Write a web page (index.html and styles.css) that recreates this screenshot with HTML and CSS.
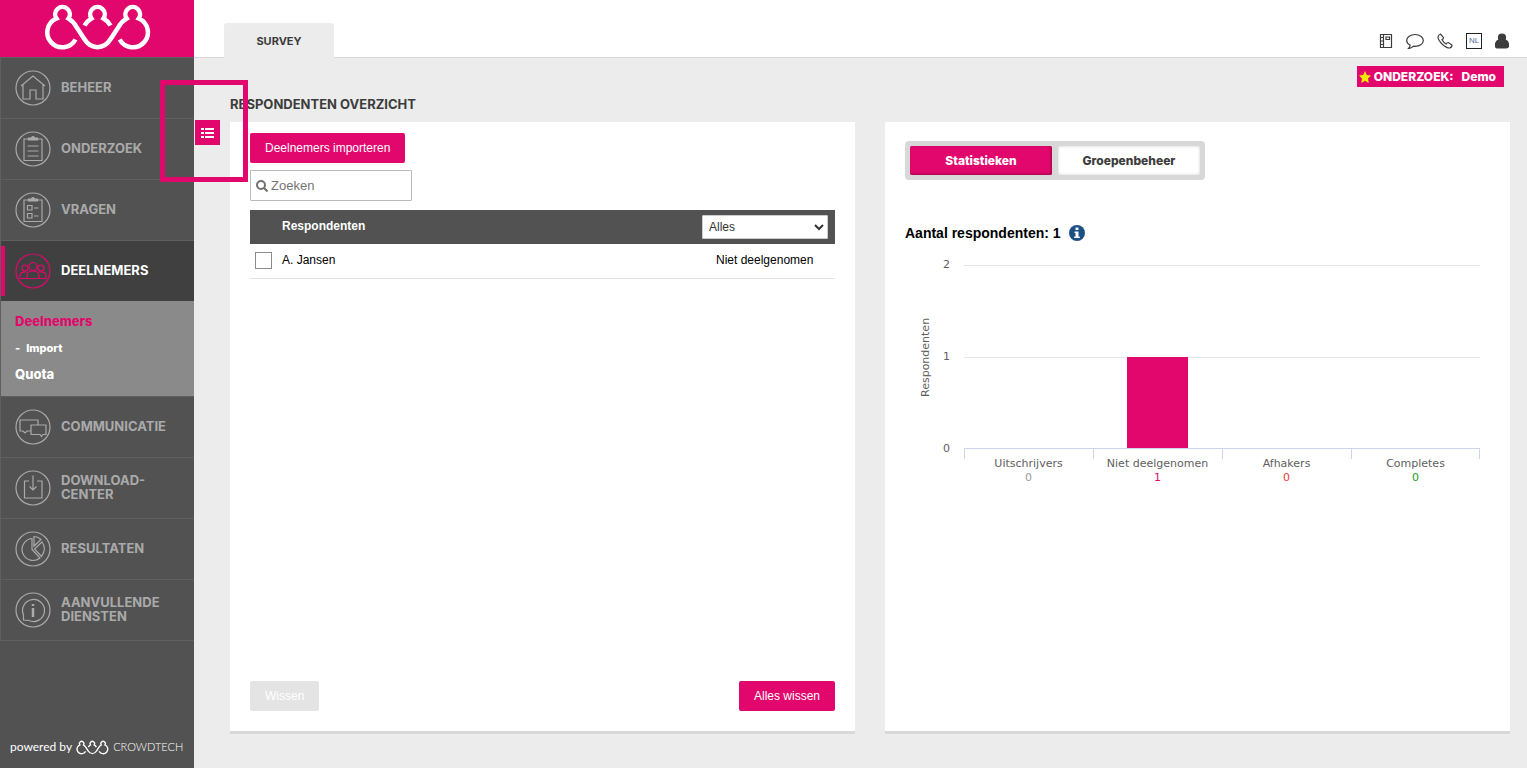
FILE: index.html
```html
<!DOCTYPE html>
<html lang="nl">
<head>
    <meta charset="UTF-8">
    <meta name="viewport" content="width=device-width, initial-scale=1.0">
    <title>Respondenten overzicht</title>
    <link rel="stylesheet" href="styles.css">
</head>
<body>
    <!-- Shared logo shape -->
    <svg class="sprite" width="0" height="0" aria-hidden="true">
        <symbol id="logo" viewBox="44 3 108 48">
            <path d="M75.500 39.500A15 15 0 1 1 56.500 18.500A7.300 7.300 0 1 1 68.500 18.500Q73 21 76.500 27L84 38.500C91 50 104 50 111 38.500L118.500 27Q122 21 126.700 18.500A7.300 7.300 0 1 1 138.700 18.500A15 15 0 1 1 119.700 39.500"/>
            <path d="M84.500 25.500Q87 21 91.500 18.500A7.300 7.300 0 1 1 103.500 18.500Q108 21 110.500 25.500"/>
        </symbol>
    </svg>

    <aside class="sidebar">
        <a class="brand" href="#" aria-label="Crowdtech">
            <svg class="logo" width="108" height="48"><use href="#logo"/></svg>
        </a>

        <nav class="menu">
            <a class="menu-item" href="#">
                <svg class="menu-icon" viewBox="0 0 36 36"><circle cx="18" cy="18" r="17"/><path d="M6 16L18 6L30 16M8 15V29H15V20H21V29H28V15"/></svg>
                <span>BEHEER</span>
            </a>
            <a class="menu-item" href="#">
                <svg class="menu-icon" viewBox="0 0 36 36"><circle cx="18" cy="18" r="17"/><path d="M9 8H27V29.500H9ZM12.500 15H23.500M12.500 20H23.500M12.500 25H23.500"/><path class="filled" d="M13.500 9V7H16Q18 4 20 7H22.500V9Z"/></svg>
                <span>ONDERZOEK</span>
            </a>
            <a class="menu-item" href="#">
                <svg class="menu-icon" viewBox="0 0 36 36"><circle cx="18" cy="18" r="17"/><path d="M9 8H27V29.500H9ZM12.500 13.500H17V18H12.500ZM12.500 21.500H17V26H12.500ZM19 16H23.500M19 24H23.500"/><path class="filled" d="M13.500 9V7H16Q18 4 20 7H22.500V9Z"/></svg>
                <span>VRAGEN</span>
            </a>
            <a class="menu-item active" href="#">
                <svg class="menu-icon" viewBox="0 0 36 36"><circle cx="18" cy="18" r="17"/><circle cx="18" cy="13.500" r="4"/><circle cx="10" cy="15" r="3"/><circle cx="26" cy="15" r="3"/><path d="M12 25.500V23Q12 18 18 18Q24 18 24 23V25.500M12 19Q5 18 5 23V25.500H31V23Q31 18 24 19"/></svg>
                <span>DEELNEMERS</span>
            </a>
            <div class="submenu">
                <a class="submenu-item current" href="#">Deelnemers</a>
                <a class="submenu-item child" href="#">Import</a>
                <a class="submenu-item" href="#">Quota</a>
            </div>
            <a class="menu-item" href="#">
                <svg class="menu-icon" viewBox="0 0 36 36"><circle cx="18" cy="18" r="17"/><path d="M16 22H12L10 24L8 22H5V11H23V16M16 16H31V25.500H28L26.500 27.500L25 25.500H16Z"/></svg>
                <span>COMMUNICATIE</span>
            </a>
            <a class="menu-item" href="#">
                <svg class="menu-icon" viewBox="0 0 36 36"><circle cx="18" cy="18" r="17"/><path d="M14 11H9.500V28H27V11H22M18 5.500V20M14.500 16.500L18 20L21.500 16.500"/></svg>
                <span>DOWNLOAD-<br>CENTER</span>
            </a>
            <a class="menu-item" href="#">
                <svg class="menu-icon" viewBox="0 0 36 36"><circle cx="18" cy="18" r="17"/><path d="M17 7.500A11 11 0 1 0 25 27L17 18.500ZM19 5.500V15L26 8.500Q23 5.500 19 5.500ZM27 11L19.500 18L26.500 25.500Q32 17.500 27 11Z"/></svg>
                <span>RESULTATEN</span>
            </a>
            <a class="menu-item" href="#">
                <svg class="menu-icon" viewBox="0 0 36 36"><circle cx="18" cy="18" r="17"/><path d="M8.500 28V23A11 11 0 1 1 14 28.500Z"/><path class="thick" d="M18 16V25M18 12V14"/></svg>
                <span>AANVULLENDE<br>DIENSTEN</span>
            </a>
        </nav>

        <div class="powered">
            <span>powered by</span>
            <svg class="logo" width="33" height="15"><use href="#logo"/></svg>
            <span class="powered-name">CROWDTECH</span>
        </div>

        <button class="menu-toggle" type="button" aria-label="Menu">
            <svg width="14" height="12" viewBox="0 0 14 12"><path d="M4 2H13M4 6H13M4 10H13M0 2H3M0 6H3M0 10H3"/></svg>
        </button>
        <div class="highlight"></div>
    </aside>

    <div class="page">
        <header class="topbar">
            <a class="tab" href="#">SURVEY</a>
            <div class="tools">
                <a href="#" aria-label="Handleiding"><svg width="14" height="16" viewBox="0 0 14 16"><path d="M1.500 1.500H12.500V14.500H1.500ZM4.500 1.500V14.500M7 4H10.500V6.500H7ZM1 4.500H4M1 8H4M1 11.500H4"/></svg></a>
                <a href="#" aria-label="Chat"><svg width="18" height="16" viewBox="0 0 18 16"><path d="M2.500 15.500Q4.500 13.500 4 12Q0.700 10.500 0.700 7.500C0.700 4 4.500 1.500 9 1.500S17.300 4 17.300 7.500S13.500 13.300 9 13.300L7.500 13.200Q5.500 15.300 2.500 15.500Z"/></svg></a>
                <a href="#" aria-label="Telefoon"><svg width="16" height="16" viewBox="0 0 16 16"><path d="M1 4Q1.500 1.500 3.500 1L6.500 4.700Q6.500 6 5 6.800Q6.500 9.500 9.200 11Q10 9.500 11.300 9.500L15 12Q15 14.500 12.500 15Q9.500 15 5.500 11.500Q1 7 1 4Z"/></svg></a>
                <a class="language" href="#">NL</a>
                <a href="#" aria-label="Account"><svg class="solid" width="14" height="16" viewBox="0 0 14 16"><circle cx="7" cy="4.500" r="3.500"/><path d="M3.500 7Q7 10 10.500 7Q13.500 8 13.500 12V13Q13.500 15 11 15H3Q0.500 15 0.500 13V12Q0.500 8 3.500 7Z"/></svg></a>
            </div>
        </header>

        <main class="content">
            <div class="survey-badge">
                <svg width="12" height="12" viewBox="0 0 12 12"><path d="M6 0L7.800 4L12 4.500L9 7.500L9.700 12L6 9.800L2.300 12L3 7.500L0 4.500L4.200 4Z"/></svg>
                <span>ONDERZOEK:</span>
                <span>Demo</span>
            </div>
            <h1>RESPONDENTEN OVERZICHT</h1>

            <div class="panels">
                <section class="panel">
                    <button class="btn" type="button">Deelnemers importeren</button>
                    <div class="search">
                        <svg width="12" height="12" viewBox="0 0 12 12"><circle cx="5" cy="5" r="4"/><path d="M8 8L11.500 11.500"/></svg>
                        <input type="text" placeholder="Zoeken" aria-label="Zoeken">
                    </div>
                    <table class="respondents">
                        <thead>
                            <tr>
                                <th class="col-check"></th>
                                <th>Respondenten</th>
                                <th class="col-status">
                                    <select aria-label="Status">
                                        <option>Alles</option>
                                        <option>Niet deelgenomen</option>
                                    </select>
                                </th>
                            </tr>
                        </thead>
                        <tbody>
                            <tr>
                                <td class="col-check"><input type="checkbox" id="resp1"></td>
                                <td><label for="resp1">A. Jansen</label></td>
                                <td class="status">Niet deelgenomen</td>
                            </tr>
                        </tbody>
                    </table>
                    <div class="panel-actions">
                        <button class="btn" type="button" disabled>Wissen</button>
                        <button class="btn" type="button">Alles wissen</button>
                    </div>
                </section>

                <section class="panel stats">
                    <div class="switch">
                        <button class="selected" type="button">Statistieken</button>
                        <button type="button">Groepenbeheer</button>
                    </div>
                    <h2>
                        Aantal respondenten: 1
                        <svg width="16" height="16" viewBox="0 0 16 16"><circle cx="8" cy="8" r="8"/><path d="M6.500 2.500H9.500V5H6.500ZM5.500 6.500H9.500V11.500H10.800V13H5.200V11.500H6.500V8H5.500Z"/></svg>
                    </h2>
                    <div class="chart">
                        <div class="axis-title">Respondenten</div>
                        <div class="y-axis">
                            <span>2</span>
                            <span>1</span>
                            <span>0</span>
                        </div>
                        <div class="plot">
                            <div class="bar" style="height: 0%"></div>
                            <div class="bar" style="height: 50%"></div>
                            <div class="bar" style="height: 0%"></div>
                            <div class="bar" style="height: 0%"></div>
                        </div>
                        <div class="x-axis">
                            <div>Uitschrijvers<br><span class="gray">0</span></div>
                            <div>Niet deelgenomen<br><span class="pink">1</span></div>
                            <div>Afhakers<br><span class="red">0</span></div>
                            <div>Completes<br><span class="green">0</span></div>
                        </div>
                    </div>
                </section>
            </div>
        </main>
    </div>
</body>
</html>
```
FILE: styles.css
```css
* {
    box-sizing: border-box;
}
body {
    margin: 0;
    min-height: 100vh;
    display: flex;
    background: #ececec;
    color: #000;
    font-family: "Liberation Sans", Arial, sans-serif;
    font-size: 12px;
}
a {
    color: inherit;
    text-decoration: none;
}
button, input, select {
    font-family: inherit;
}
.sprite {
    position: absolute;
}
.logo {
    flex: none;
    fill: none;
    stroke: #fff;
    stroke-width: 4.5;
}

/* Sidebar */
.sidebar {
    position: relative;
    flex: none;
    width: 194px;
    display: flex;
    flex-direction: column;
    background: #525252;
}
.brand {
    height: 57px;
    padding: 3px 0 0 44px;
    background: #e2076c;
}
.menu {
    border-left: 1px solid #5f5f5f;
    border-bottom: 1px solid #5f5f5f;
    font-family: Inter, sans-serif;
    font-weight: 700;
    color: #aaa;
}
.menu-item {
    height: 61px;
    display: flex;
    align-items: center;
    gap: 10px;
    padding-left: 14px;
    border-top: 1px solid #5f5f5f;
    font-size: 13px;
    line-height: 14px;
}
.menu-item span {
    padding-bottom: 2px;
}
.menu-icon {
    width: 36px;
    height: 36px;
    flex: none;
    fill: none;
    stroke: currentColor;
    stroke-width: 1.2;
}
.menu-icon .filled {
    fill: currentColor;
}
.menu-icon .thick {
    stroke-width: 2.5;
}
.menu-item.active {
    background: linear-gradient(#e2076c, #e2076c) 0 5px / 4px 50px no-repeat #404040;
    color: #fff;
}
.active .menu-icon {
    color: #e2076c;
}
.submenu {
    height: 95px;
    padding: 10px 14px;
    background: #8a8a8a;
    color: #fff;
    font-weight: 800;
}
.submenu-item {
    display: block;
    font-size: 13px;
    line-height: 20px;
}
.submenu-item.current {
    color: #e2076c;
}
.submenu-item.child {
    padding: 7px 0 6px;
    font-size: 11px;
    line-height: 20px;
}
.submenu-item.child::before {
    content: "-";
    margin-right: 6px;
}
.powered {
    display: flex;
    align-items: center;
    gap: 4px;
    margin-top: auto;
    padding: 0 10px 12px;
    color: #fff;
    font-family: Lato, sans-serif;
    font-size: 12px;
    line-height: 18px;
    white-space: nowrap;
}
.powered-name {
    font-size: 11px;
    font-weight: 300;
}
.menu-toggle {
    position: absolute;
    top: 120px;
    left: 195px;
    width: 25px;
    height: 25px;
    padding: 0;
    display: flex;
    align-items: center;
    justify-content: center;
    border: none;
    background: #e2076c;
}
.menu-toggle svg {
    stroke: #fff;
    stroke-width: 2;
}
.highlight {
    position: absolute;
    top: 80px;
    left: 160px;
    width: 88px;
    height: 102px;
    border: 5px solid #e2076c;
    pointer-events: none;
}

/* Top bar */
.page {
    flex: 1;
    min-width: 0;
    display: flex;
    flex-direction: column;
}
.topbar {
    height: 58px;
    display: flex;
    align-items: flex-end;
    justify-content: space-between;
    padding: 0 18px 0 30px;
    background: #fff;
    border-bottom: 1px solid #d9d9d9;
}
.tab {
    width: 110px;
    height: 35px;
    margin-bottom: -1px;
    border-radius: 3px 3px 0 0;
    background: #ececec;
    color: #3c3c3c;
    font: 700 11px/36px Inter, sans-serif;
    text-align: center;
}
.tools {
    display: flex;
    align-items: center;
    gap: 13px;
    padding-bottom: 8px;
    color: #3c3c3c;
}
.tools svg {
    display: block;
    fill: none;
    stroke: currentColor;
    stroke-width: 1.2;
}
.tools .solid {
    fill: currentColor;
}
.language {
    width: 16px;
    height: 16px;
    border: 1px solid #222;
    color: #4a6d9c;
    font-size: 8px;
    line-height: 14px;
    text-align: center;
}

/* Content */
.content {
    flex: 1;
    display: flex;
    flex-direction: column;
    padding: 8px 17px 34px 36px;
}
.survey-badge {
    align-self: flex-end;
    display: flex;
    align-items: center;
    gap: 8px;
    height: 21px;
    margin-right: 6px;
    padding: 0 8px 0 2px;
    background: #e2076c;
    color: #fff;
    font: 800 12px/21px Inter, sans-serif;
}
.survey-badge svg {
    margin-right: -5px;
    fill: #f4e800;
}
h1 {
    margin: 7px 0 8px;
    color: #3c3c3c;
    font: 700 13px/20px Inter, sans-serif;
}
.panels {
    flex: 1;
    display: grid;
    grid-template-columns: 1fr 1fr;
    gap: 30px;
}
.panel {
    display: flex;
    flex-direction: column;
    align-items: flex-start;
    padding: 11px 20px 20px;
    background: #fff;
    border-bottom: 3px solid #d8d8d8;
}
.btn {
    height: 30px;
    padding: 0 15px;
    border: none;
    border-radius: 2px;
    background: #e2076c;
    color: #fff;
    font-size: 12px;
    cursor: pointer;
}
.btn:disabled {
    background: #e4e4e4;
    color: #fff;
    cursor: default;
}
.search {
    width: 162px;
    height: 31px;
    display: flex;
    align-items: center;
    gap: 3px;
    margin: 7px 0 9px;
    padding: 0 5px;
    border: 1px solid #bbb;
    border-radius: 1px;
}
.search svg {
    flex: none;
    fill: none;
    stroke: #707070;
    stroke-width: 2;
}
.search input {
    width: 100%;
    padding: 0;
    border: none;
    outline: none;
    font-size: 13px;
}
.search input::placeholder {
    color: #757575;
}
.respondents {
    width: 100%;
    border-collapse: collapse;
    text-align: left;
}
.respondents th {
    height: 34px;
    padding: 0 0 2px;
    background: #525252;
    color: #fff;
}
.respondents th.col-status {
    width: 133px;
    padding: 0 7px 0 0;
}
.respondents td {
    height: 34px;
    padding: 0 0 2px;
    border-bottom: 1px solid #e4e4e4;
}
.respondents .status {
    padding-left: 14px;
}
.respondents .col-check {
    width: 32px;
    padding: 0 0 0 5px;
}
.respondents select {
    display: block;
    width: 126px;
    height: 24px;
    padding: 0 2px;
    border: 1px solid #ccc;
    border-radius: 1px;
    background-color: #fff;
    color: #333;
    font-size: 12px;
}
.respondents input {
    appearance: none;
    display: block;
    width: 17px;
    height: 17px;
    margin: 0;
    border: 1px solid #8c8c8c;
    background: #fff;
}
.respondents input:checked {
    background: #e2076c;
}
.panel-actions {
    width: 100%;
    display: flex;
    justify-content: space-between;
    margin-top: auto;
}

/* Statistics */
.stats {
    padding-top: 19px;
}
.switch {
    width: 300px;
    height: 39px;
    display: grid;
    grid-template-columns: 1fr 1fr;
    gap: 6px;
    padding: 5px;
    border-radius: 4px;
    background: #d8d8d8;
}
.switch button {
    padding: 0;
    border: none;
    border-radius: 2px;
    background: #fff;
    box-shadow: inset 0 0 3px #ccc;
    color: #3c3c3c;
    font: 800 12px Inter, sans-serif;
}
.switch button.selected {
    background: #e2076c;
    box-shadow: inset -1px -1px 3px #a0054d;
    color: #fff;
}
h2 {
    display: flex;
    align-items: center;
    gap: 8px;
    margin: 43px 0 22px;
    font-size: 14px;
    line-height: 20px;
}
h2 svg {
    fill: #1b4f86;
}
h2 path {
    fill: #fff;
}
.chart {
    width: 100%;
    display: grid;
    grid-template-columns: 28px 11px 1fr;
    column-gap: 10px;
    padding-right: 10px;
    color: #606060;
    font: 11px/14px "DejaVu Sans", sans-serif;
}
.axis-title {
    justify-self: end;
    writing-mode: vertical-rl;
    transform: rotate(180deg);
    text-align: center;
}
.y-axis {
    display: flex;
    flex-direction: column;
    justify-content: space-between;
    margin: -7px 0;
}
.plot {
    height: 184px;
    display: grid;
    grid-template-columns: repeat(4, 1fr);
    grid-template-rows: 100%;
    align-items: end;
    justify-items: center;
    border-top: 1px solid #e6e6e6;
    border-bottom: 1px solid #ccd6eb;
    background: linear-gradient(#e6e6e6, #e6e6e6) 0 50% / 100% 1px no-repeat;
}
.bar {
    width: 48%;
    background: #e2076c;
}
.x-axis {
    grid-column: 3;
    display: grid;
    grid-template-columns: repeat(4, 1fr);
    background: linear-gradient(#ccd6eb, #ccd6eb) 100% 0 / 1px 10px no-repeat;
    text-align: center;
}
.x-axis div {
    padding-top: 8px;
    background: linear-gradient(#ccd6eb, #ccd6eb) 0 0 / 1px 10px no-repeat;
}
.gray {
    color: #999;
}
.pink {
    color: #e2076c;
}
.red {
    color: #e8413c;
}
.green {
    color: #1a9c1a;
}
```
